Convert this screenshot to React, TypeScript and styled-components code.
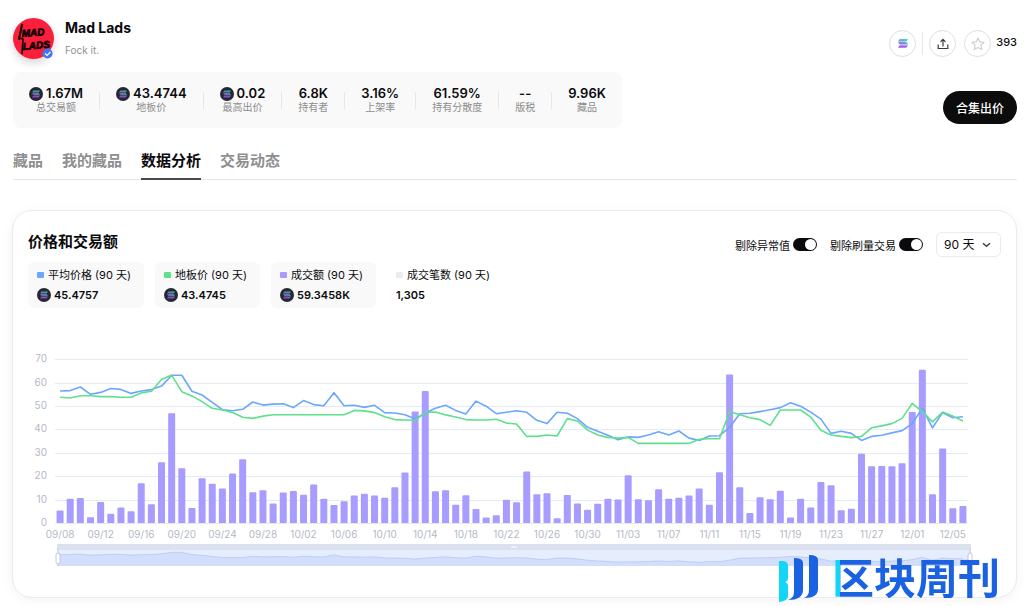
import React, { useState } from 'react';
import styled, { createGlobalStyle } from 'styled-components';

const sans = '"Inter", "Noto Sans CJK SC", sans-serif';

const GlobalStyle = createGlobalStyle`
  *, *::before, *::after { box-sizing: border-box; }
  body { margin: 0; background: #fff; color: #0b0b0d; font-family: ${sans}; font-size: 12px; }
  button, select, input { font-family: inherit; }
  h1, h2, p, dl, dd, dt { margin: 0; }
`;

const Page = styled.main`
  position: relative;
  padding: 18px 8px 9px 13px;
`;

const Header = styled.header`
  display: flex;
  justify-content: space-between;
`;

const Identity = styled.div`
  display: flex;
  gap: 11px;
  height: 54px;
`;

const Avatar = styled.div`
  width: 41px;
  height: 41px;
  border-radius: 50%;
  box-shadow: 0 4px 8px rgba(0, 0, 0, 0.16);
  svg { display: block; }
`;

const Name = styled.h1`
  font-size: 14px;
  font-weight: 700;
  line-height: 20px;
`;

const Tagline = styled.p`
  margin-top: 4px;
  font-size: 10px;
  line-height: 16px;
  color: #929292;
`;

const Stats = styled.dl`
  display: flex;
  align-items: center;
  gap: 16px;
  height: 56px;
  padding: 0 16px;
  border-radius: 8px;
  background: #f9f9f9;
`;

const Stat = styled.div`
  display: flex;
  flex-direction: column-reverse;
  align-items: center;
  dt { font-size: 10px; line-height: 13px; color: #8c8c8c; white-space: nowrap; }
  dd { display: flex; align-items: center; gap: 3px; font-size: 13px; font-weight: 600; line-height: 15px; }
`;

const Divider = styled.span<{ $tall?: boolean }>`
  width: 1px;
  height: ${p => (p.$tall ? 23 : 17)}px;
  background: #e6e6e6;
`;

const Side = styled.div`
  display: flex;
  flex-direction: column;
  align-items: flex-end;
  gap: 34px;
  padding-top: 12px;
`;

const Actions = styled.div`
  display: flex;
  align-items: center;
  gap: 6px;
`;

const RoundButton = styled.button`
  display: grid;
  place-items: center;
  width: 27px;
  height: 27px;
  padding: 0;
  border: 1px solid #dedede;
  border-radius: 50%;
  background: #fff;
  cursor: pointer;
`;

const Favourite = styled.div`
  display: flex;
  gap: 5px;
  margin-left: 2px;
  font-size: 11px;
  font-weight: 500;
  line-height: 24px;
`;

const OfferButton = styled.button`
  width: 74px;
  height: 33px;
  padding: 0;
  border: 0;
  border-radius: 17px;
  background: #0c0c0c;
  color: #fff;
  font-size: 12px;
  font-weight: 500;
  cursor: pointer;
`;

const Tabs = styled.nav`
  display: flex;
  gap: 19px;
  margin-top: 16px;
  border-bottom: 1px solid #e6e6e6;
`;

const Tab = styled.a<{ $active?: boolean }>`
  height: 36px;
  margin-bottom: -1px;
  border-bottom: 2px solid ${p => (p.$active ? '#4a4a4a' : 'transparent')};
  color: ${p => (p.$active ? '#0b0b0d' : '#8f8f8f')};
  font-size: 15px;
  font-weight: 700;
  line-height: 34px;
  text-decoration: none;
`;

const Card = styled.section`
  margin: 30px 0 0 -1px;
  padding: 21px 15px 17px;
  border: 1px solid #ebebeb;
  border-radius: 20px;
  background: #fff;
  box-shadow: 0 2px 12px rgba(0, 0, 0, 0.05);
`;

const CardHeader = styled.div`
  display: flex;
  align-items: flex-start;
  justify-content: space-between;
`;

const Title = styled.h2`
  font-size: 15px;
  font-weight: 600;
  line-height: 20px;
`;

const Controls = styled.div`
  display: flex;
  align-items: center;
  gap: 13px;
`;

const SwitchLabel = styled.label`
  display: flex;
  align-items: center;
  gap: 3px;
  font-size: 11px;
  cursor: pointer;
`;

const Switch = styled.input`
  appearance: none;
  display: flex;
  justify-content: flex-start;
  width: 24px;
  height: 13px;
  margin: 0;
  padding: 1px;
  border-radius: 7px;
  background: #b5b5b5;
  cursor: pointer;
  &::before { content: ''; width: 11px; height: 11px; border-radius: 50%; background: #fff; }
  &:checked { justify-content: flex-end; background: #0b0b0d; }
`;

const SelectBox = styled.div`
  display: grid;
  align-items: center;
  > * { grid-area: 1 / 1; }
  svg { justify-self: end; margin-right: 10px; pointer-events: none; }
`;

const Select = styled.select`
  appearance: none;
  width: 65px;
  height: 25px;
  padding: 0 7px;
  border: 1px solid #ebebeb;
  border-radius: 6px;
  background: #fff;
  color: #0b0b0d;
  font-size: 12px;
`;

const Legend = styled.div`
  display: flex;
  gap: 11px;
  margin-top: 5px;
`;

const Chip = styled.button<{ $on?: boolean }>`
  display: flex;
  flex-direction: column;
  gap: 4px;
  height: 46px;
  padding: 5px 13px 0 9px;
  border: 0;
  border-radius: 6px;
  background: ${p => (p.$on ? '#f9f9f9' : 'transparent')};
  color: #0b0b0d;
  font-size: 11px;
  line-height: 16px;
  white-space: nowrap;
  cursor: pointer;
`;

const ChipRow = styled.span<{ $strong?: boolean }>`
  display: flex;
  align-items: center;
  gap: ${p => (p.$strong ? 3 : 4)}px;
  font-weight: ${p => (p.$strong ? 600 : 400)};
`;

const Swatch = styled.i<{ $color: string }>`
  width: 7px;
  height: 6px;
  border-radius: 1px;
  background: ${p => p.$color};
`;

const ChartArt = styled.svg`
  display: block;
  width: 100%;
  height: auto;
  margin-top: 42px;
  font-family: ${sans};
  font-size: 10px;
  fill: #b4b9c6;
`;

const Watermark = styled.div`
  position: absolute;
  right: 25px;
  bottom: 3px;
  display: flex;
  align-items: flex-start;
  gap: 13px;
  pointer-events: none;
`;

const WatermarkText = styled.span`
  background: linear-gradient(90deg, #12d6f8 8px, #1b62e2 8px);
  background-clip: text;
  color: transparent;
  font-family: "Noto Sans CJK SC", sans-serif;
  font-size: 42px;
  font-weight: 700;
  line-height: 44px;
`;

const SolBars = ({ x, y, w }: { x: number; y: number; w: number }) => {
  const s = w / 12;
  return (
    <g transform={`translate(${x} ${y}) scale(${s})`} fill="url(#sol)">
      <path d="M2 0H12L10 3H0Z" />
      <path d="M0 3.700H10L12 6.700H2Z" />
      <path d="M2 7.400H12L10 10.400H0Z" />
    </g>
  );
};

const SolGradient = () => (
  <svg width="0" height="0" style={{ position: 'absolute' }} aria-hidden="true">
    <defs>
      <linearGradient id="sol" gradientUnits="userSpaceOnUse" x1="8" y1="0" x2="4" y2="10">
        <stop offset="0" stopColor="#3fd9bd" />
        <stop offset="0.5" stopColor="#7d8fd8" />
        <stop offset="1" stopColor="#b54df2" />
      </linearGradient>
    </defs>
  </svg>
);

const SolCoin = () => (
  <svg width="14" height="14" viewBox="0 0 14 14" aria-hidden="true">
    <circle cx="7" cy="7" r="7" fill="#252733" />
    <g opacity="0.75"><SolBars x={3} y={3.5} w={8} /></g>
  </svg>
);

const stats = [
  { label: '总交易额', value: '1.67M', coin: true },
  { label: '地板价', value: '43.4744', coin: true },
  { label: '最高出价', value: '0.02', coin: true },
  { label: '持有者', value: '6.8K' },
  { label: '上架率', value: '3.16%' },
  { label: '持有分散度', value: '61.59%' },
  { label: '版税', value: '--' },
  { label: '藏品', value: '9.96K' },
];

const series = [
  { label: '平均价格 (90 天)', value: '45.4757', color: '#6ba6ff', coin: true },
  { label: '地板价 (90 天)', value: '43.4745', color: '#5fe08c', coin: true },
  { label: '成交额 (90 天)', value: '59.3458K', color: '#a79cff', coin: true },
  { label: '成交笔数 (90 天)', value: '1,305', color: '#ebebeb', coin: false },
];

const volume = [
  5.3, 10.4, 10.7, 2.5, 9, 4, 6.6, 5, 17, 8, 26, 46.9, 23.4, 6.4, 19.1, 16.8, 14.7, 21.2, 27.2, 13.1,
  14, 8.3, 13, 13.7, 12.1, 16.5, 10.4, 7.7, 9.3, 11.7, 12.5, 11.7, 10.8, 15.3, 21.6, 47.6, 56.4, 13.6, 14, 7.8,
  11.9, 6, 2.3, 3.3, 9.9, 8.9, 22, 12.3, 12.7, 2, 12, 8.3, 5.7, 8.2, 10.4, 10, 20.4, 10.1, 9.7, 14.4,
  10.4, 10.8, 11.8, 14.7, 7.8, 21.7, 63.5, 15.3, 4.3, 11, 10.1, 13.8, 2.3, 10.4, 6.6, 17.5, 16.1, 5.4, 6.1, 29.6,
  24.2, 24.4, 24.2, 25.5, 47.4, 65.5, 12.3, 31.8, 6.3, 7.3,
];

const average = [
  56.4, 56.6, 58.1, 55, 55.8, 57.5, 57.1, 55.4, 56.4, 57, 58.5, 63.1, 63.1, 56.3, 54.7, 51.6, 48.4, 48, 48.6, 51.7,
  50.4, 50.8, 51, 49.3, 52.3, 50.6, 50.1, 55.7, 50.1, 50.3, 49.4, 50.3, 47.2, 47, 46.3, 44.4, 47, 49, 50.3, 48.1,
  46.6, 52.1, 49.9, 46.7, 47.3, 48, 47.3, 43.9, 42.5, 47.3, 46.9, 44.6, 40.9, 39.2, 37.5, 35.6, 36.8, 36.6, 37.6, 39,
  37.6, 39.3, 36.3, 35.3, 37.2, 37.3, 40.9, 46.7, 46.9, 47.6, 48.4, 49.3, 51.4, 49.9, 47.4, 44.4, 38.3, 39.2, 38.3, 35.3,
  37, 37.5, 38.5, 39.5, 42.5, 49, 40.7, 47.2, 45, 45.4,
];

const floor = [
  53.7, 53.4, 54.4, 54.4, 54, 54, 53.7, 53.7, 55.6, 56.3, 61.3, 63.2, 56.1, 54.3, 51.9, 49, 48.3, 47.2, 45.2, 44.7,
  45.7, 46.3, 46.3, 46.3, 46.3, 46.3, 46.3, 46.3, 46.3, 48.1, 47.9, 47.2, 45.4, 44.2, 44, 43.9, 47.3, 47.4, 46.2, 45.3,
  44.2, 44, 44, 44.3, 42.7, 42.3, 37, 37, 37.6, 37.2, 44.6, 43.6, 39.7, 37.6, 36.6, 36.3, 36.6, 34, 34, 34,
  34, 34, 34, 35.8, 36, 36, 47.6, 46.3, 45, 44.2, 41.7, 48.3, 48.3, 48.3, 45.2, 39.6, 37.6, 37, 36.5, 37,
  40.7, 41.5, 42.5, 44.7, 51.1, 47.6, 43.2, 47.4, 45.7, 43.6,
];

const dates = [
  '09/08', '09/12', '09/16', '09/20', '09/24', '09/28', '10/02', '10/06', '10/10', '10/14', '10/18', '10/22',
  '10/26', '10/30', '11/03', '11/07', '11/11', '11/15', '11/19', '11/23', '11/27', '12/01', '12/05',
];

const LEFT = 27;
const RIGHT = 940;
const BASE = 173;
const STEP = (RIGHT - LEFT) / volume.length;
const px = (i: number) => LEFT + STEP * (i + 0.5);
const py = (v: number) => BASE - v * 2.34;
const line = (data: number[], y: (v: number) => number = py) =>
  data.map((v, i) => `${px(i).toFixed(1)},${y(v).toFixed(1)}`).join(' ');

const brush = line(average, v => 225 - v * 0.36);

const Handle = ({ x }: { x: number }) => (
  <g>
    <line x1={x} x2={x} y1="198" y2="216" stroke="#c6d0e6" />
    <rect x={x - 2} y="203" width="4" height="11" rx="2" fill="#fff" stroke="#bcc8e0" />
  </g>
);

const PriceChart = () => (
  <ChartArt viewBox="0 0 973 230" role="img" aria-label="价格和交易额">
    {[0, 10, 20, 30, 40, 50, 60, 70].map(v => (
      <g key={v}>
        <line x1={LEFT} x2={RIGHT} y1={Math.round(py(v)) + 0.5} y2={Math.round(py(v)) + 0.5} stroke="#e6eaf4" />
        <text x="19" y={Math.round(py(v)) + 3} textAnchor="end">{v}</text>
      </g>
    ))}
    {volume.map((v, i) => (
      <path
        key={i}
        fill="#a79cff"
        d={`M${px(i) - 3.5} ${BASE}V${py(v) + 1}q0 -1 1 -1h5q1 0 1 1V${BASE}Z`}
      />
    ))}
    <polyline points={line(average)} fill="none" stroke="#6ba6ff" strokeWidth="1.6" strokeLinejoin="round" />
    <polyline points={line(floor)} fill="none" stroke="#5fe08c" strokeWidth="1.6" strokeLinejoin="round" />
    {dates.map((d, i) => (
      <text key={d} x={px(i * 4)} y="188" textAnchor="middle">{d}</text>
    ))}
    <rect x="29" y="194" width="914" height="6" fill="#dbe1ef" />
    <rect x="29" y="200" width="914" height="16" fill="#e6edfd" />
    <polygon points={`29,205 ${brush} 943,209 943,216 29,216`} fill="#d2defb" />
    <polyline points={brush} fill="none" stroke="#bdcff5" />
    <path d="M484 196v2M486 196v2M488 196v2" stroke="#fff" />
    <Handle x={30} />
    <Handle x={942} />
  </ChartArt>
);

const tabs = ['藏品', '我的藏品', '数据分析', '交易动态'];

export default function App() {
  const [outliers, setOutliers] = useState(true);
  const [wash, setWash] = useState(true);

  return (
    <Page>
      <GlobalStyle />
      <SolGradient />
      <Header>
        <div>
          <Identity>
            <Avatar>
              <svg width="41" height="41" viewBox="0 0 41 41" overflow="visible" aria-label="Mad Lads">
                <circle cx="20.5" cy="20.5" r="20.5" fill="#fb1f3c" />
                <path d="M9 6L6 20l4 1-1 15M9.500 6L6 22" stroke="#160308" strokeWidth="1.600" fill="none" />
                <g
                  fill="#160308"
                  stroke="#160308"
                  strokeWidth="0.8"
                  fontFamily='"Liberation Sans", sans-serif'
                  fontWeight="700"
                  fontStyle="italic"
                  fontSize="10"
                >
                  <text x="9" y="19" transform="rotate(-5 9 19)">MAD</text>
                  <text x="10" y="32" transform="rotate(-5 10 32)">LADS</text>
                </g>
                <circle cx="34.500" cy="35.500" r="5" fill="#3b78f2" />
                <path d="M32 35.500l2 2 3.500-3.500" stroke="#fff" strokeWidth="1.200" fill="none" />
              </svg>
            </Avatar>
            <div>
              <Name>Mad Lads</Name>
              <Tagline>Fock it.</Tagline>
            </div>
          </Identity>
          <Stats>
            {stats.map((s, i) => (
              <React.Fragment key={s.label}>
                {i > 0 && <Divider />}
                <Stat>
                  <dt>{s.label}</dt>
                  <dd>{s.coin && <SolCoin />}{s.value}</dd>
                </Stat>
              </React.Fragment>
            ))}
          </Stats>
        </div>
        <Side>
          <Actions>
            <RoundButton aria-label="Solana">
              <svg width="10" height="9" viewBox="0 0 10 9"><SolBars x={0} y={0} w={10} /></svg>
            </RoundButton>
            <Divider $tall />
            <RoundButton aria-label="分享">
              <svg width="12" height="12" viewBox="0 0 12 12" fill="none" stroke="#3a3a3a" strokeWidth="1.200">
                <path d="M6 8.500V1.500M3.500 3.800L6 1.300l2.500 2.500M1.200 6.500V10.500h9.600V6.500" />
              </svg>
            </RoundButton>
            <Favourite>
              <RoundButton aria-label="收藏">
                <svg width="14" height="14" viewBox="0 0 14 14" fill="none" stroke="#cfcfcf" strokeWidth="1.200" strokeLinejoin="round">
                  <path d="M7 1l1.800 3.900 4.200.5-3.100 2.900.8 4.200L7 10.400l-3.700 2.100.8-4.200L1 5.400l4.200-.5Z" />
                </svg>
              </RoundButton>
              <span>393</span>
            </Favourite>
          </Actions>
          <OfferButton>合集出价</OfferButton>
        </Side>
      </Header>

      <Tabs>
        {tabs.map((t, i) => (
          <Tab key={t} href="#" $active={i === 2}>{t}</Tab>
        ))}
      </Tabs>

      <Card>
        <CardHeader>
          <Title>价格和交易额</Title>
          <Controls>
            <SwitchLabel>
              剔除异常值
              <Switch type="checkbox" checked={outliers} onChange={e => setOutliers(e.target.checked)} />
            </SwitchLabel>
            <SwitchLabel>
              剔除刷量交易
              <Switch type="checkbox" checked={wash} onChange={e => setWash(e.target.checked)} />
            </SwitchLabel>
            <SelectBox>
              <Select aria-label="时间范围" defaultValue="90">
                <option value="90">90 天</option>
              </Select>
              <svg width="9" height="6" viewBox="0 0 9 6" fill="none" stroke="#3a3a3a" strokeWidth="1.300">
                <path d="M1 1.300L4.500 4.300 8 1.300" />
              </svg>
            </SelectBox>
          </Controls>
        </CardHeader>
        <Legend>
          {series.map(s => (
            <Chip key={s.label} $on={s.coin}>
              <ChipRow><Swatch $color={s.color} />{s.label}</ChipRow>
              <ChipRow $strong>{s.coin && <SolCoin />}{s.value}</ChipRow>
            </Chip>
          ))}
        </Legend>
        <PriceChart />
      </Card>

      <Watermark>
        <svg width="40" height="50" viewBox="0 0 40 50" aria-hidden="true">
          <path d="M0 7h3q6 0 6 5v12q0 3-3 4 3 1 3 4v10q0 5-9 6Z" fill="#12d6f8" />
          <path d="M15 4q9 0 9 5v27q0 10-15 10 6-2 6-8Z" fill="#1b62e2" />
          <path d="M30 1q9 0 9 5v29q0 9-14 9 5-2 5-8Z" fill="#1b62e2" />
        </svg>
        <WatermarkText>区块周刊</WatermarkText>
      </Watermark>
    </Page>
  );
}
